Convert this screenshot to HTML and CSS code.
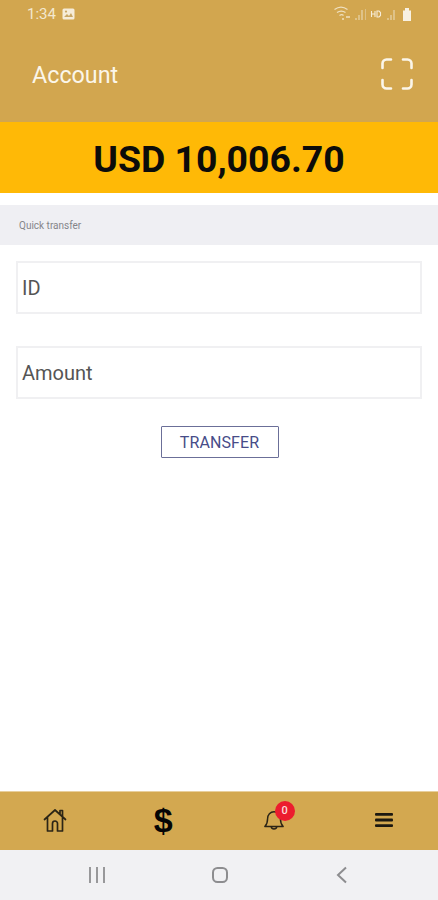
FILE: index.html
```html
<!DOCTYPE html>
<html lang="en">
<head>
<meta charset="utf-8">
<title>Account</title>
<link rel="stylesheet" href="styles.css">
</head>
<body>
<div class="app">
  <header class="top">
    <div class="status">
      <div class="status-left">
        <span class="time">1:34</span>
        <svg class="pic" width="13" height="12" viewBox="0 0 13 12"><rect x="0.5" y="0.5" width="12" height="11" rx="1.5" fill="#f6ecd8"/><path d="M2 9l3-3 2 2 2-3 2 4z" fill="#c9a765"/><circle cx="4" cy="3.6" r="1.1" fill="#c9a765"/></svg>
      </div>
      <svg class="status-right" width="80" height="16" viewBox="0 0 80 16" fill="none">
        <path d="M0.500 3.500C4.500 .5 9.500 .5 13.500 3.500M3 6.500C6 4.500 8.500 4.500 11.500 6.500M5.500 9.500c1.500-1 3-1 4 0" stroke="#efe0c0" stroke-width="1.300"/>
        <path d="M8 13h2M12 11h4" stroke="#efe0c0" stroke-width="1.400"/>
        <path d="M22 14v-2M25 14V9M28 14V4" stroke="#e8d6ae" stroke-width="1.200"/>
        <path d="M31.500 3v11" stroke="#dcc085" stroke-width="1"/>
        <path d="M37.500 5v6M41 5v6M37.500 8H41M43 5v6h2l1.500-1.500v-3L45 5z" stroke="#f6ecd8" stroke-width="1.100"/>
        <path d="M54 14v-2M57 14V9M60 14V4" stroke="#e8d6ae" stroke-width="1.200"/>
        <path d="M69 4.500h2V2h4v2.500h2v10.500h-8z" fill="#f8f1e2"/>
      </svg>
    </div>
    <div class="titlebar">
      <h1 class="title">Account</h1>
      <svg class="scan" width="32" height="32" viewBox="0 0 32 32" fill="none">
        <path d="M1.500 10V5.500a4 4 0 0 1 4-4H10M22 1.500h4.500a4 4 0 0 1 4 4V10M30.500 22v4.500a4 4 0 0 1-4 4H22M10 30.500H5.500a4 4 0 0 1-4-4V22" stroke="#fbf6ea" stroke-width="2.600" stroke-linecap="round"/>
      </svg>
    </div>
  </header>
  <div class="balance">USD 10,006.70</div>
  <div class="section">Quick transfer</div>
  <main class="form">
    <div class="field">ID</div>
    <div class="field">Amount</div>
    <div class="action"><button class="transfer" type="button">TRANSFER</button></div>
  </main>
  <nav class="tabs">
    <a class="tab home">
      <svg width="26" height="26" viewBox="0 0 26 26" fill="none" stroke="#2c2516" stroke-width="1.700" stroke-linejoin="round" stroke-linecap="round">
        <path d="M2.500 12.500 13 3l10.500 9.500M5.500 10.500V24h5v-7.500a2.500 2.500 0 0 1 5 0V24h5V10.500M18 7V3.500h2.500V9"/>
      </svg>
    </a>
    <a class="tab dollar">$</a>
    <a class="tab">
      <span class="bell">
        <svg width="22" height="26" viewBox="0 0 24 26" fill="none" stroke="#2c2516" stroke-width="1.600" stroke-linejoin="round">
          <path d="M2 20c2-2 3-4 3-8.500C5 7 8 4 12 4s7 3 7 7.500c0 4.500 1 6.500 3 8.500z"/>
          <path d="M9 20.500c.5 3 5.500 3 6 0"/>
        </svg>
        <span class="badge">0</span>
      </span>
    </a>
    <a class="tab menu">
      <svg width="20" height="16" viewBox="0 0 20 16" fill="#1c1810"><rect x="1" y="1" width="18" height="2.800" rx="1"/><rect x="1" y="6.600" width="18" height="2.800" rx="1"/><rect x="1" y="12.200" width="18" height="2.800" rx="1"/></svg>
    </a>
  </nav>
  <footer class="sysnav">
    <svg width="18" height="16" viewBox="0 0 18 16" fill="#98989a"><rect x="1" y="0" width="2" height="16"/><rect x="8" y="0" width="2" height="16"/><rect x="15" y="0" width="2" height="16"/></svg>
    <svg class="sys-home" width="18" height="16" viewBox="0 0 18 16" fill="none" stroke="#8d8d8f" stroke-width="2"><rect x="2" y="1" width="14" height="14" rx="4.500"/></svg>
    <svg width="14" height="18" viewBox="0 0 14 18" fill="none" stroke="#8d8d8f" stroke-width="2"><path d="M11 1.500 3 9l8 7.500"/></svg>
  </footer>
</div>
</body>
</html>
```
FILE: styles.css
```css
* { box-sizing: border-box; }
html, body { margin: 0; padding: 0; }
body { background: #fff; font-family: Roboto, "Liberation Sans", sans-serif; }
.app { width: 438px; height: 900px; display: flex; flex-direction: column; overflow: hidden; background: #fff; }
.top { height: 122px; background: #d2a64f; display: flex; flex-direction: column; flex: none; }
.status { height: 28px; padding: 0 24px 0 27px; display: flex; justify-content: space-between; align-items: center; }
.status-left { display: flex; align-items: center; gap: 6px; }
.time { color: #f3e8cf; font-size: 15px; }
.status-right { display: block; }
.titlebar { flex: 1; display: flex; justify-content: space-between; align-items: center; padding: 0 25px 0 32px; margin-top: -2px; }
.title { margin: 2px 0 0; font-size: 23.300px; font-weight: 400; color: #fbf6ea; }
.scan { margin-top: 0; }
.balance { height: 71px; flex: none; background: #ffb906; color: #0c0c0a; font-size: 37.400px; font-weight: 700; text-align: center; line-height: 75px; }
.section { margin-top: 12px; height: 40px; flex: none; background: #efeff3; color: #85858a; font-size: 10px; line-height: 41px; padding-left: 19px; }
.form { flex: 1; padding: 16px 16px 0 16px; display: flex; flex-direction: column; gap: 32px; }
.field { height: 53px; border: 2px solid #f0f0f2; padding: 0 4px; font-size: 20px; line-height: 51px; color: #555; }
.action { display: flex; justify-content: center; margin-top: -5px; padding-left: 1px; }
.transfer { width: 118px; height: 32px; border: 1.500px solid #6b6f98; border-radius: 1px; background: #fff; color: #474c88; font-family: inherit; font-size: 16px; letter-spacing: 0.100px; padding: 0; }
.tabs { height: 59px; flex: none; background: #d3a850; border-top: 1px solid #e8cf9c; display: grid; grid-template-columns: repeat(4, 1fr); align-items: center; justify-items: center; padding: 0 0 3px 0; }
.tab { display: flex; align-items: center; justify-content: center; }
.home { margin-left: 1px; }
.menu { margin-left: 1px; }
.dollar { font-size: 34px; font-weight: 700; color: #050505; line-height: 1; font-family: "Liberation Sans", sans-serif; margin-right: 2px; }
.bell { position: relative; display: block; width: 22px; height: 26px; }
.bell svg { display: block; }
.badge { position: absolute; left: 12px; top: -6px; width: 20px; height: 20px; border-radius: 50%; background: #ec1c2e; color: #fbdcdc; font-size: 11px; font-weight: 500; text-align: center; line-height: 20px; }
.sysnav { height: 50px; flex: none; background: #f1f1f3; display: flex; align-items: center; justify-content: space-between; padding: 0 89px 0 88px; }
.sys-home { margin-left: -2px; }
```
